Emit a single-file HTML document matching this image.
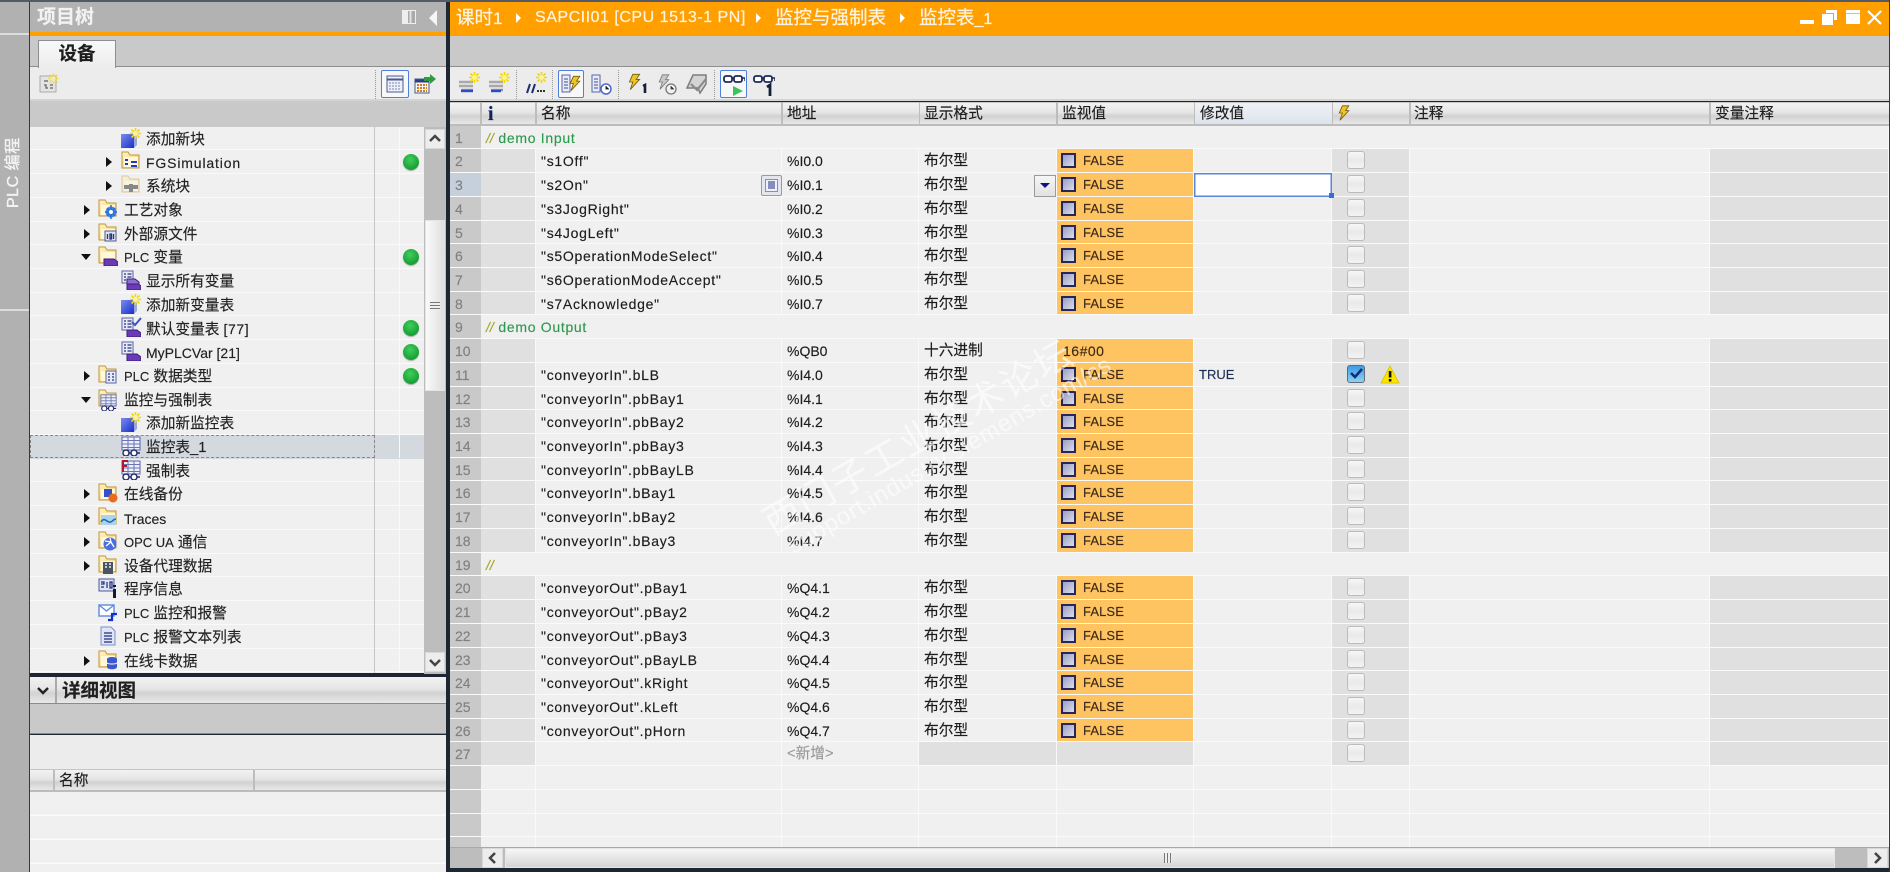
<!DOCTYPE html>
<html lang="zh"><head><meta charset="utf-8"><title>监控表_1</title>
<style>
*,*:before,*:after{box-sizing:border-box}
html,body{margin:0;padding:0;background:#1e2533}
body{width:1890px;height:872px;overflow:hidden;position:relative;font:14.7px/22px "Liberation Sans","Noto Sans CJK SC",sans-serif;color:#1c1c1c;-webkit-text-stroke:.15px}
#w{position:absolute;inset:0;filter:blur(.35px);overflow:hidden}
.p{position:absolute}
.l{font-size:13px;font-weight:400}
.k{font-size:14px;font-weight:400}
svg{position:absolute;overflow:visible}
.hd{background:linear-gradient(#f2f2f2,#e6e6e6 45%,#d2d2d2 62%,#e8e8e8);border-top:1px solid #c6c6c6;border-bottom:2px solid #bcbcbc}
.t{position:relative;height:23.72px;border-bottom:1.5px solid #fafafa;background:#f0f0f0;white-space:nowrap}
.t:before{content:"";position:absolute;left:344px;top:0;bottom:-2px;width:1px;background:#c6c6c6}
.t:after{content:"";position:absolute;left:369px;top:0;bottom:0;width:1px;background:#fafafa}
.t span{position:absolute;top:2px;line-height:22px;color:#222}
.d1{left:94px}.d2{left:116px}
.t em{position:absolute;top:7px;border-style:solid;width:0;height:0}
.c1{left:54px;border-width:5px 0 5px 6px;border-color:transparent transparent transparent #111}
.c2{left:76px;border-width:5px 0 5px 6px;border-color:transparent transparent transparent #111}
.o1{left:51px;top:9px!important;border-width:6px 5px 0 5px;border-color:#111 transparent transparent transparent;}
.t svg{width:20px;height:20px;top:1px}
.i1{left:68px}.i2{left:91px}
.g{position:absolute;left:373px;top:4px;width:16px;height:16px;border-radius:50%;background:radial-gradient(circle at 45% 35%,#3fce5a,#169c32 75%);box-shadow:0 1px 1px #aaa;z-index:2}
.r{display:grid;grid-template-columns:31px 55px 246px 137px 138px 137px 138px 78px 300px 179px;grid-template-rows:23.72px;height:23.72px;white-space:nowrap}
.r i{font-style:normal;display:block;background:#f0f0f0;border-right:1.5px solid #f9f9f9;border-bottom:1.5px solid #fafafa;padding:0 0 0 5px;position:relative;overflow:visible;line-height:24px}
.r i.n{background:#c9c9c9;color:#808080;padding-left:5px;border-right:0;font-size:14px}
.r i.y{background:#e0e0e0}
.r i.m{background:#fec462;padding-left:26px;font-size:13px;letter-spacing:.1px;color:#3f2a18}
.r i.m:before{content:"";position:absolute;left:4px;top:4px;width:15px;height:15px;border:2px solid #26265e;background:linear-gradient(135deg,#9a9ec4,#dcdde8)}
.r i.m.h{padding-left:6px;font-size:14px;letter-spacing:.5px}.r i.m.h:before{display:none}
.r i.b:before{content:"";position:absolute;left:15px;top:2px;width:18px;height:18px;border:1.5px solid #bbb;border-radius:3px;background:linear-gradient(#f7f7f7,#e9e9e9 50%,#f3f3f3)}
.r.c{display:flex}
.r.c i.s{flex:1;color:#2e9a4f;padding-left:5px;font-size:14px;letter-spacing:.7px}
.s u{text-decoration:none;color:#a3a52c;font-style:italic;letter-spacing:0}
.r i.a{letter-spacing:.72px;font-size:14px}
.r i.f{font-size:14px}
</style></head><body>
<svg width="0" height="0" style="position:absolute"><defs>
<linearGradient id="gb" x1="0" y1="0" x2="1" y2="1"><stop offset="0" stop-color="#7a8cf0"/><stop offset="1" stop-color="#1a2fc8"/></linearGradient>
<linearGradient id="gf" x1="0" y1="0" x2="1" y2="1"><stop offset="0" stop-color="#fff3c4"/><stop offset="1" stop-color="#f4cf6d"/></linearGradient>
<symbol id="folder" viewBox="0 0 20 20"><path d="M1 1h6l2 3h9v13H1z" fill="url(#gf)" stroke="#c0963c"/><path d="M3 6H17V16H3z" fill="#fff8da"/></symbol>
<symbol id="star" viewBox="0 0 20 20"><g stroke="#f2d800" stroke-width="1.600"><path d="M14.500 0v11M9 5.500h11M10.500 1.500l8 8M18.500 1.500l-8 8"/></g><circle cx="14.500" cy="5.500" r="2.500" fill="#fff58a"/></symbol>
<symbol id="new" viewBox="0 0 20 20"><path d="M0 6h13v14H0z" fill="url(#gb)"/><path d="M13 6l3 3v8l-3 3z" fill="#9aa7d8"/><use href="#star"/></symbol>
<symbol id="tag" viewBox="0 0 20 20"><path d="M6 13h10l4 3v4H6z" fill="#6a3ab8" stroke="#3a1f78"/></symbol>
<symbol id="list" viewBox="0 0 20 20"><rect x="1" y="1" width="11" height="12" fill="#e8ebf6" stroke="#5a64a8"/><path d="M3 4h2M3 7h2M3 10h2M6.500 4h4M6.500 7h4M6.500 10h4" stroke="#24307c" stroke-width="1.300"/><use href="#tag"/></symbol>
<symbol id="grid" viewBox="0 0 20 20"><rect x="1" y="1" width="18" height="13" fill="#eef0f8" stroke="#5a64a8"/><path d="M1 4.500h18M1 8h18M1 11.500h18M7 1v13M13 1v13" stroke="#6a74b8"/><circle cx="5" cy="17" r="3" fill="#fff" stroke="#23296e" stroke-width="1.400"/><circle cx="13" cy="17" r="3" fill="#fff" stroke="#23296e" stroke-width="1.400"/><path d="M8 17h2M16 17h3" stroke="#23296e" stroke-width="1.400"/></symbol>
<symbol id="bolt" viewBox="0 0 20 20"><path d="M8 1h8l-4 6h4L5 19l3-9H4z" fill="#efc320" stroke="#6d5a12"/></symbol>
<symbol id="boltg" viewBox="0 0 20 20"><path d="M8 1h8l-4 6h4L5 19l3-9H4z" fill="#c8c8c8" stroke="#777"/></symbol>
<symbol id="bars" viewBox="0 0 22 22"><path d="M1 9h14M1 13h14" stroke="#a8a8a8" stroke-width="2.400"/><path d="M3 17h12" stroke="#909090" stroke-width="2.400"/></symbol>
<symbol id="glass" viewBox="0 0 22 12"><rect x="1" y="2" width="8" height="6" rx="2" fill="#fff" stroke="#1f2a5c" stroke-width="1.800"/><rect x="11" y="2" width="8" height="6" rx="2" fill="#fff" stroke="#1f2a5c" stroke-width="1.800"/><path d="M9 4h2M19 4h3v3" stroke="#1f2a5c" stroke-width="1.500" fill="none"/></symbol>
</defs></svg>
<div id="w">
<!-- left strip -->
<div class="p" style="left:0;top:0;width:30px;height:872px;background:#b1b1b1"></div>
<div class="p" style="left:0;top:33px;width:29px;height:1.500px;background:#dcdcdc"></div>
<div class="p" style="left:0;top:309px;width:29px;height:1.500px;background:#dcdcdc"></div>
<div class="p" style="left:-21px;top:162px;width:70px;height:22px;transform:rotate(-90deg);color:#f4f4f4;font-size:16px;text-align:center;white-space:nowrap;letter-spacing:.5px;-webkit-text-stroke:.35px">PLC 编程</div>
<div class="p" style="left:29px;top:0;width:1.500px;height:872px;background:#30384a"></div>
<!-- left panel -->
<div class="p" style="left:30px;top:2px;width:416px;height:30px;background:#b2b2b2"></div>
<div class="p" style="left:37px;top:6px;color:#f2f2f2;font-size:19px;font-weight:bold;line-height:24px">项目树</div>
<div class="p" style="left:402px;top:10px;width:14px;height:14px;border:1.500px solid #eee;background:linear-gradient(90deg,#eee 40%,#aaa 40%,#aaa 55%,#e2e2e2 55%,#e2e2e2 70%,#aaa 70%)"></div>
<div class="p" style="left:429px;top:10px;width:0;height:0;border-style:solid;border-width:8px 8px 8px 0;border-color:transparent #f6f6f6 transparent transparent"></div>
<div class="p" style="left:30px;top:32px;width:416px;height:4px;background:#ff9f00"></div>
<div class="p" style="left:30px;top:36px;width:416px;height:30px;background:#c9c9c9"></div>
<div class="p" style="left:38px;top:40px;width:78px;height:28px;background:linear-gradient(#f8f8f8,#ececec);border:1px solid #8f8f8f;border-bottom:0;text-align:center;font-weight:bold;font-size:18.500px;line-height:25px;color:#1c1c1c;z-index:2">设备</div>
<div class="p" style="left:30px;top:66px;width:416px;height:1.500px;background:#8e8e8e"></div>
<div class="p" style="left:30px;top:67px;width:416px;height:34px;background:#ececec;border-bottom:2px solid #d4d4d4"></div>
<svg style="left:39px;top:73px;width:20px;height:20px" viewBox="0 0 20 20"><rect x="1" y="3" width="16" height="16" fill="#e4e4e4" stroke="#aaa"/><path d="M5 8h4M5 12h2v3h2M11 12h3M11 15h3" stroke="#777" stroke-width="1.500" fill="none"/><use href="#star" opacity=".5"/></svg>
<div class="p" style="left:375px;top:70px;border-left:1px dotted #999;height:29px"></div>
<div class="p" style="left:381px;top:70px;width:28px;height:28px;background:#f8f8f8;border:1.500px solid #4f80dc;border-radius:2px"></div>
<svg style="left:386px;top:75px;width:18px;height:18px" viewBox="0 0 18 18"><rect x="1" y="1" width="16" height="16" fill="#eef0f8" stroke="#4b5a8c"/><path d="M1 4.500h16" stroke="#4b5a8c" stroke-width="2"/><path d="M3 8h12M3 11h12M3 14h12" stroke="#7985b8" stroke-dasharray="2 1"/></svg>
<svg style="left:414px;top:74px;width:22px;height:20px" viewBox="0 0 22 20"><rect x="1" y="5" width="14" height="14" fill="#f4f4f4" stroke="#4b5a8c"/><path d="M1 7h14" stroke="#2c3e86" stroke-width="3"/><path d="M3 11h10M3 14h10M3 17h10" stroke="#d27a20" stroke-width="2" stroke-dasharray="2 1"/><path d="M10 3h6V0l6 5-6 5V7h-6z" fill="#2e9b44"/></svg>
<div class="p" style="left:30px;top:101px;width:416px;height:25.700px;background:#c9c9c9"></div>
<!-- tree -->
<div class="p" style="left:30px;top:126.700px;width:394px;height:546px;overflow:hidden;background:#f0f0f0">
<div class="t"><svg class="i2"><use href="#new"/></svg><span class="d2">添加新块</span></div>
<div class="t"><em class="c2"></em><svg class="i2"><use href="#folder"/><path d="M4 8h3v2H4zM4 12h3v2H4zM10 10h6v2h-6zM10 14h6v2h-6z" fill="#1c3bc8"/></svg><span class="d2 k" style="letter-spacing:.85px">FGSimulation</span><b class="g"></b></div>
<div class="t"><em class="c2"></em><svg class="i2"><use href="#folder" opacity=".45"/><path d="M3 12h14" stroke="#888" stroke-width="4"/><rect x="8" y="9" width="4" height="8" fill="#888"/></svg><span class="d2">系统块</span></div>
<div class="t"><em class="c1"></em><svg class="i1"><use href="#folder"/><circle cx="13" cy="13" r="5.500" fill="#3d8ae8"/><path d="M13 6v14M7 13h12M9 9l8 8M17 9l-8 8" stroke="#2a6ad0" stroke-width="1.500"/><circle cx="13" cy="13" r="2" fill="#fff"/></svg><span class="d1">工艺对象</span></div>
<div class="t"><em class="c1"></em><svg class="i1"><use href="#folder"/><rect x="7" y="8" width="11" height="10" fill="#dfe3f2" stroke="#4a5a9c"/><path d="M9.500 11v5M12 11h1.500v5H12zM15.500 11v5" stroke="#26357c" stroke-width="1.300" fill="none"/></svg><span class="d1">外部源文件</span></div>
<div class="t"><em class="o1" style="left:51px"></em><svg class="i1"><use href="#folder"/><use href="#tag"/></svg><span class="d1"><b class="l">PLC</b> 变量</span><b class="g"></b></div>
<div class="t"><svg class="i2"><use href="#list"/><path d="M6 9h8l4 3v2H6z" fill="#8f6cd0" stroke="#3a1f78"/></svg><span class="d2">显示所有变量</span></div>
<div class="t"><svg class="i2"><use href="#new"/></svg><span class="d2">添加新变量表</span></div>
<div class="t"><svg class="i2"><use href="#list"/><path d="M11 5l3 3 6-7" stroke="#3a53c4" stroke-width="2" fill="none"/></svg><span class="d2">默认变量表 <b class="k" style="letter-spacing:.6px">[77]</b></span><b class="g"></b></div>
<div class="t"><svg class="i2"><use href="#list"/></svg><span class="d2 k">MyPLCVar [21]</span><b class="g"></b></div>
<div class="t"><em class="c1"></em><svg class="i1"><use href="#folder"/><rect x="8" y="6" width="10" height="12" fill="#e8ebf6" stroke="#5a64a8"/><path d="M10 9h2M10 12h2M10 15h2M14 9h2M14 12h2M14 15h2" stroke="#24307c" stroke-width="1.300"/></svg><span class="d1"><b class="l">PLC</b> 数据类型</span><b class="g"></b></div>
<div class="t"><em class="o1"></em><svg class="i1"><use href="#folder"/><g transform="translate(2,5) scale(.85)"><use href="#grid" width="20" height="20"/></g></svg><span class="d1">监控与强制表</span></div>
<div class="t"><svg class="i2"><use href="#new"/></svg><span class="d2">添加新监控表</span></div>
<div class="t" style="background:#d3d9de;border-bottom-color:#d3d9de"><div class="p" style="left:0;top:0;bottom:0;width:345px;outline:1px dashed #888;outline-offset:-1px"></div><svg class="i2"><use href="#grid"/></svg><span class="d2">监控表_1</span></div>
<div class="t"><svg class="i2"><use href="#grid"/><path d="M1 0h6v2H3v3h3v2H3v5H1z" fill="#b3172c"/></svg><span class="d2">强制表</span></div>
<div class="t"><em class="c1"></em><svg class="i1"><use href="#folder"/><rect x="6" y="6" width="8" height="8" fill="#3452c8"/><circle cx="15" cy="15" r="4.500" fill="#ec6a1c"/></svg><span class="d1">在线备份</span></div>
<div class="t"><em class="c1"></em><svg class="i1"><use href="#folder"/><rect x="3" y="8" width="15" height="10" fill="#a8d4ef"/><path d="M3 15c3-5 5-1 8 0s4-3 7-3" stroke="#2468b0" stroke-width="1.600" fill="none"/></svg><span class="d1 k">Traces</span></div>
<div class="t"><em class="c1"></em><svg class="i1"><use href="#folder"/><circle cx="12" cy="13" r="6.500" fill="#4a6ee0"/><path d="M7 10l6 1 3 5M12 7l1 4-5 4" stroke="#fff" stroke-width="1.300" fill="none"/></svg><span class="d1"><b class="l">OPC UA</b> 通信</span></div>
<div class="t"><em class="c1"></em><svg class="i1"><use href="#folder"/><rect x="5" y="7" width="10" height="12" fill="#4a5564"/><path d="M7 9h2M11 9h2M7 12h2M11 12h2" stroke="#eee" stroke-width="1.500"/></svg><span class="d1">设备代理数据</span></div>
<div class="t"><svg class="i1"><rect x="1" y="1" width="15" height="12" fill="#dfe3f2" stroke="#4a5a9c"/><path d="M3 4h3v2H3M3 9h3M9 4v6M12 4h2v6h-2z" stroke="#1f2a7c" stroke-width="1.200" fill="none"/><path d="M15 7h3v2h-3zM15 11h3v9h-3z" fill="#101a30"/></svg><span class="d1">程序信息</span></div>
<div class="t"><svg class="i1"><rect x="1" y="3" width="15" height="11" fill="#fff" stroke="#5c8adf" stroke-width="1.400"/><path d="M1 3l7.500 6L16 3" stroke="#5c8adf" stroke-width="1.400" fill="none"/><path d="M10 18h4v-6h5" stroke="#1030cc" stroke-width="2.200" fill="none"/></svg><span class="d1"><b class="l">PLC</b> 监控和报警</span></div>
<div class="t"><svg class="i1"><path d="M3 1h10l4 4v14H3z" fill="#dfe5f7" stroke="#7e8ecb"/><path d="M6 7h8M6 10h8M6 13h8M6 16h8" stroke="#1f2a7c" stroke-width="1.300"/></svg><span class="d1"><b class="l">PLC</b> 报警文本列表</span></div>
<div class="t"><em class="c1"></em><svg class="i1"><use href="#folder"/><ellipse cx="14" cy="9" rx="5" ry="2" fill="#3a58cc"/><path d="M9 9v8c0 3 10 3 10 0V9" fill="#3a58cc"/><path d="M9 12.500c0 2 10 2 10 0" stroke="#fff" fill="none"/></svg><span class="d1">在线卡数据</span></div>
</div>
<!-- tree scrollbar -->
<div class="p" style="left:424px;top:126.700px;width:22px;height:547px;background:#bdbdbd"></div>
<div class="p" style="left:425px;top:129px;width:20px;height:20px;background:#ededed;border:1px solid #d8d8d8"></div>
<svg style="left:429px;top:134px;width:12px;height:9px" viewBox="0 0 12 9"><path d="M1 7l5-5 5 5" stroke="#444" stroke-width="2.500" fill="none"/></svg>
<div class="p" style="left:425px;top:220px;width:20px;height:171px;background:linear-gradient(90deg,#fafafa,#dedede);border:1px solid #e4e4e4"></div>
<div class="p" style="left:430px;top:302px;width:10px;height:8px;background:repeating-linear-gradient(#777 0 1px,#eee 1px 3px)"></div>
<div class="p" style="left:425px;top:652px;width:20px;height:20px;background:#ededed;border:1px solid #d8d8d8"></div>
<svg style="left:429px;top:658px;width:12px;height:9px" viewBox="0 0 12 9"><path d="M1 2l5 5 5-5" stroke="#444" stroke-width="2.500" fill="none"/></svg>
<!-- detail -->
<div class="p" style="left:30px;top:673.500px;width:416px;height:3.500px;background:#1e2533"></div>
<div class="p hd" style="left:30px;top:677px;width:416px;height:27px;border-top:0;border-bottom:1.500px solid #8a8a8a"></div>
<div class="p" style="left:55px;top:677px;width:1.500px;height:26px;background:#aaa"></div>
<svg style="left:37px;top:686px;width:12px;height:9px" viewBox="0 0 12 9"><path d="M1 2l5 5 5-5" stroke="#222" stroke-width="2.400" fill="none"/></svg>
<div class="p" style="left:62px;top:679px;font-weight:bold;font-size:18.500px;line-height:24px;color:#1f1f1f">详细视图</div>
<div class="p" style="left:30px;top:704px;width:416px;height:30px;background:#c9c9c9;border-bottom:1.500px solid #8c8c8c"></div>
<div class="p" style="left:30px;top:735px;width:416px;height:34px;background:#ececec"></div>
<div class="p hd" style="left:30px;top:769px;width:416px;height:23px"></div>
<div class="p" style="left:53px;top:770px;width:1.500px;height:21px;background:#bdbdbd"></div>
<div class="p" style="left:253px;top:770px;width:1.500px;height:21px;background:#bdbdbd"></div>
<div class="p" style="left:59px;top:770px">名称</div>
<div class="p" style="left:30px;top:792px;width:416px;height:80px;background:repeating-linear-gradient(#f0f0f0 0 22.500px,#fbfbfb 22.500px 24px)"></div>
<!-- divider -->
<div class="p" style="left:446px;top:0;width:4px;height:872px;background:#1e2533"></div>
<!-- right panel -->
<div class="p" style="left:450px;top:2px;width:1439px;height:34px;background:#ff9f00"></div>
<div class="p" style="left:456px;top:6px;color:#fdf3e0;font-size:18.500px;line-height:24px;-webkit-text-stroke:.25px">课时<span style="font-size:17px;letter-spacing:.4px">1</span></div>
<div class="p" style="left:535px;top:6px;color:#fdf3e0;font-size:16px;line-height:24px;letter-spacing:.52px;white-space:nowrap;-webkit-text-stroke:.25px">SAPCII01 [CPU 1513-1 PN]</div>
<div class="p" style="left:775px;top:6px;color:#fdf3e0;font-size:18.500px;line-height:24px;white-space:nowrap;-webkit-text-stroke:.25px">监控与强制表</div>
<div class="p" style="left:919px;top:6px;color:#fdf3e0;font-size:18.500px;line-height:24px;white-space:nowrap;-webkit-text-stroke:.25px">监控表<span style="font-size:16px">_1</span></div>
<div class="p" style="left:516px;top:13px;border-style:solid;border-width:5px 0 5px 5px;border-color:transparent transparent transparent #fff"></div>
<div class="p" style="left:756px;top:13px;border-style:solid;border-width:5px 0 5px 5px;border-color:transparent transparent transparent #fff"></div>
<div class="p" style="left:900px;top:13px;border-style:solid;border-width:5px 0 5px 5px;border-color:transparent transparent transparent #fff"></div>
<div class="p" style="left:1800px;top:20px;width:14px;height:4px;background:#fff"></div>
<svg style="left:1822px;top:10px;width:15px;height:15px" viewBox="0 0 15 15"><path d="M4 0h11v10h-3V3H4z" fill="#fff"/><rect y="4" width="11" height="11" fill="#fff"/></svg>
<div class="p" style="left:1846px;top:10px;width:14px;height:14px;background:linear-gradient(#fff 3px,#ffb84a 3px,#ffb84a 4px,#fff 4px)"></div>
<svg style="left:1867px;top:10px;width:15px;height:15px" viewBox="0 0 15 15"><path d="M1 1l13 13M14 1L1 14" stroke="#fff" stroke-width="2.200"/></svg>
<div class="p" style="left:450px;top:36px;width:1439px;height:30px;background:#c9c9c9"></div>
<div class="p" style="left:450px;top:66px;width:1439px;height:1.500px;background:#8e8e8e"></div>
<div class="p" style="left:450px;top:67px;width:1439px;height:34px;background:#ececec;border-bottom:2px solid #d4d4d4"></div>
<!-- toolbar icons -->
<svg style="left:458px;top:73px;width:22px;height:22px"><use href="#bars"/><path d="M3 18h12" stroke="#2c4ec4" stroke-width="2.400"/><use href="#star" x="2" y="-1" width="20" height="20"/></svg>
<svg style="left:488px;top:73px;width:22px;height:22px"><use href="#bars"/><path d="M3 18h10" stroke="#2c4ec4" stroke-width="2.400"/><use href="#star" x="2" y="-1" width="20" height="20"/></svg>
<div class="p" style="left:516px;top:70px;border-left:1px dotted #999;height:29px"></div>
<svg style="left:524px;top:73px;width:22px;height:22px" viewBox="0 0 22 22"><path d="M3 20l3-9M8 20l3-9" stroke="#1e2e6c" stroke-width="2"/><path d="M13 18h2M16 18h2M19 18h2" stroke="#333" stroke-width="2"/><use href="#star" x="3" y="-1" width="20" height="20"/></svg>
<div class="p" style="left:552px;top:70px;border-left:1px dotted #999;height:29px"></div>
<div class="p" style="left:558px;top:70px;width:26px;height:28px;background:#f8f8f8;border:1.500px solid #4f80dc;border-radius:2px"></div>
<svg style="left:561px;top:73px;width:22px;height:22px" viewBox="0 0 22 22"><rect x="1" y="2" width="8" height="17" fill="#e8ebf6" stroke="#5a64a8"/><path d="M3 6h4M3 9h4M3 12h4M3 15h4" stroke="#444b8c"/><use href="#bolt" x="6" y="1" width="16" height="19"/></svg>
<svg style="left:591px;top:73px;width:22px;height:22px" viewBox="0 0 22 22"><rect x="1" y="2" width="8" height="17" fill="#e8ebf6" stroke="#5a64a8"/><path d="M3 6h4M3 9h4M3 12h4M3 15h4" stroke="#444b8c"/><circle cx="15" cy="16" r="5" fill="#fff" stroke="#4d6ad0" stroke-width="1.500"/><path d="M15 13v3h3" stroke="#333"/></svg>
<div class="p" style="left:618px;top:70px;border-left:1px dotted #999;height:29px"></div>
<svg style="left:626px;top:73px;width:22px;height:22px" viewBox="0 0 22 22"><use href="#bolt" width="17" height="18"/><path d="M17 13l2-1v8" stroke="#14203a" stroke-width="2.600" fill="none"/></svg>
<svg style="left:656px;top:73px;width:22px;height:22px" viewBox="0 0 22 22"><use href="#boltg" width="16" height="18"/><circle cx="15" cy="16" r="5" fill="#f2f2f2" stroke="#777" stroke-width="1.300"/><path d="M15 13v3h3" stroke="#555"/></svg>
<svg style="left:686px;top:73px;width:22px;height:22px" viewBox="0 0 22 22"><path d="M7 2h13v9l-6 9-2-5H1z" fill="#d4d4d4" stroke="#7c7c7c" stroke-width="1.500"/><path d="M5 11l6 6 9-11" stroke="#888" stroke-width="2" fill="none"/></svg>
<div class="p" style="left:714px;top:70px;border-left:1px dotted #999;height:29px"></div>
<div class="p" style="left:720px;top:70px;width:27px;height:28px;background:#f8f8f8;border:1.500px solid #4f80dc;border-radius:2px"></div>
<svg style="left:723px;top:74px;width:22px;height:12px"><use href="#glass"/></svg>
<svg style="left:732px;top:86px;width:12px;height:10px" viewBox="0 0 12 10"><path d="M1 0l10 5-10 5z" fill="#3ec25a"/></svg>
<svg style="left:753px;top:74px;width:22px;height:12px"><use href="#glass"/></svg>
<svg style="left:766px;top:84px;width:8px;height:12px" viewBox="0 0 8 12"><path d="M1 3l3-2v11" stroke="#14203a" stroke-width="2.800" fill="none"/></svg>
<!-- table header -->
<div class="p hd" style="left:450px;top:102px;width:1439px;height:24px"></div>
<div class="p" style="left:480px;top:102px;width:1.500px;height:23px;background:#bdbdbd"></div>
<div class="p" style="left:535px;top:102px;width:1.500px;height:23px;background:#bdbdbd"></div>
<div class="p" style="left:781px;top:102px;width:1.500px;height:23px;background:#bdbdbd"></div>
<div class="p" style="left:918.500px;top:102px;width:1.500px;height:23px;background:#bdbdbd"></div>
<div class="p" style="left:1056px;top:102px;width:1.500px;height:23px;background:#bdbdbd"></div>
<div class="p" style="left:1194.500px;top:103px;width:137px;height:21px;background:linear-gradient(#eff1f5,#dde3ed)"></div>
<div class="p" style="left:1193.500px;top:102px;width:1.500px;height:23px;background:#bdbdbd"></div>
<div class="p" style="left:1331.500px;top:102px;width:1.500px;height:23px;background:#bdbdbd"></div>
<div class="p" style="left:1409px;top:102px;width:1.500px;height:23px;background:#bdbdbd"></div>
<div class="p" style="left:1709px;top:102px;width:1.500px;height:23px;background:#bdbdbd"></div>
<div class="p" style="left:488px;top:103px;font:bold 20px/22px 'Liberation Serif',serif;color:#12205c">i</div>
<div class="p" style="left:541px;top:103px">名称</div>
<div class="p" style="left:787px;top:103px">地址</div>
<div class="p" style="left:924px;top:103px">显示格式</div>
<div class="p" style="left:1062px;top:103px">监视值</div>
<div class="p" style="left:1200px;top:103px">修改值</div>
<svg style="left:1336px;top:104px;width:16px;height:18px" viewBox="0 0 20 20"><use href="#bolt"/></svg>
<div class="p" style="left:1414px;top:103px">注释</div>
<div class="p" style="left:1715px;top:103px">变量注释</div>
<!-- table -->
<div class="p" style="left:450px;top:125.700px;width:1439px;height:721px;overflow:hidden;background:#f0f0f0">
<div class="r c"><i class="n" style="width:31px">1</i><i class="s"><u>//</u> demo Input</i></div>
<div class="r"><i class="n">2</i><i class="y"></i><i class="a">"s1Off"</i><i class="f">%I0.0</i><i>布尔型</i><i class="m">FALSE</i><i></i><i class="y b"></i><i></i><i class="y"></i></div>
<div class="r"><i class="n" style="background:#c5d0dc">3</i><i class="y"></i><i class="a">"s2On"</i><i class="f">%I0.1</i><i>布尔型</i><i class="m">FALSE</i><i style="background:#fff;box-shadow:inset 0 0 0 1.500px #5a86dc;border:0"></i><i class="y b"></i><i></i><i class="y"></i></div>
<div class="r"><i class="n">4</i><i class="y"></i><i class="a">"s3JogRight"</i><i class="f">%I0.2</i><i>布尔型</i><i class="m">FALSE</i><i></i><i class="y b"></i><i></i><i class="y"></i></div>
<div class="r"><i class="n">5</i><i class="y"></i><i class="a">"s4JogLeft"</i><i class="f">%I0.3</i><i>布尔型</i><i class="m">FALSE</i><i></i><i class="y b"></i><i></i><i class="y"></i></div>
<div class="r"><i class="n">6</i><i class="y"></i><i class="a">"s5OperationModeSelect"</i><i class="f">%I0.4</i><i>布尔型</i><i class="m">FALSE</i><i></i><i class="y b"></i><i></i><i class="y"></i></div>
<div class="r"><i class="n">7</i><i class="y"></i><i class="a">"s6OperationModeAccept"</i><i class="f">%I0.5</i><i>布尔型</i><i class="m">FALSE</i><i></i><i class="y b"></i><i></i><i class="y"></i></div>
<div class="r"><i class="n">8</i><i class="y"></i><i class="a">"s7Acknowledge"</i><i class="f">%I0.7</i><i>布尔型</i><i class="m">FALSE</i><i></i><i class="y b"></i><i></i><i class="y"></i></div>
<div class="r c"><i class="n" style="width:31px">9</i><i class="s"><u>//</u> demo Output</i></div>
<div class="r"><i class="n">10</i><i class="y"></i><i></i><i class="f">%QB0</i><i>十六进制</i><i class="m h">16#00</i><i></i><i class="y b"></i><i></i><i class="y"></i></div>
<div class="r"><i class="n">11</i><i class="y"></i><i class="a">"conveyorIn".bLB</i><i class="f">%I4.0</i><i>布尔型</i><i class="m">FALSE</i><i style="font-size:13px;color:#1f2f55">TRUE</i><i class="y"></i><i></i><i class="y"></i></div>
<div class="r"><i class="n">12</i><i class="y"></i><i class="a">"conveyorIn".pbBay1</i><i class="f">%I4.1</i><i>布尔型</i><i class="m">FALSE</i><i></i><i class="y b"></i><i></i><i class="y"></i></div>
<div class="r"><i class="n">13</i><i class="y"></i><i class="a">"conveyorIn".pbBay2</i><i class="f">%I4.2</i><i>布尔型</i><i class="m">FALSE</i><i></i><i class="y b"></i><i></i><i class="y"></i></div>
<div class="r"><i class="n">14</i><i class="y"></i><i class="a">"conveyorIn".pbBay3</i><i class="f">%I4.3</i><i>布尔型</i><i class="m">FALSE</i><i></i><i class="y b"></i><i></i><i class="y"></i></div>
<div class="r"><i class="n">15</i><i class="y"></i><i class="a">"conveyorIn".pbBayLB</i><i class="f">%I4.4</i><i>布尔型</i><i class="m">FALSE</i><i></i><i class="y b"></i><i></i><i class="y"></i></div>
<div class="r"><i class="n">16</i><i class="y"></i><i class="a">"conveyorIn".bBay1</i><i class="f">%I4.5</i><i>布尔型</i><i class="m">FALSE</i><i></i><i class="y b"></i><i></i><i class="y"></i></div>
<div class="r"><i class="n">17</i><i class="y"></i><i class="a">"conveyorIn".bBay2</i><i class="f">%I4.6</i><i>布尔型</i><i class="m">FALSE</i><i></i><i class="y b"></i><i></i><i class="y"></i></div>
<div class="r"><i class="n">18</i><i class="y"></i><i class="a">"conveyorIn".bBay3</i><i class="f">%I4.7</i><i>布尔型</i><i class="m">FALSE</i><i></i><i class="y b"></i><i></i><i class="y"></i></div>
<div class="r c"><i class="n" style="width:31px">19</i><i class="s"><u>//</u></i></div>
<div class="r"><i class="n">20</i><i class="y"></i><i class="a">"conveyorOut".pBay1</i><i class="f">%Q4.1</i><i>布尔型</i><i class="m">FALSE</i><i></i><i class="y b"></i><i></i><i class="y"></i></div>
<div class="r"><i class="n">21</i><i class="y"></i><i class="a">"conveyorOut".pBay2</i><i class="f">%Q4.2</i><i>布尔型</i><i class="m">FALSE</i><i></i><i class="y b"></i><i></i><i class="y"></i></div>
<div class="r"><i class="n">22</i><i class="y"></i><i class="a">"conveyorOut".pBay3</i><i class="f">%Q4.3</i><i>布尔型</i><i class="m">FALSE</i><i></i><i class="y b"></i><i></i><i class="y"></i></div>
<div class="r"><i class="n">23</i><i class="y"></i><i class="a">"conveyorOut".pBayLB</i><i class="f">%Q4.4</i><i>布尔型</i><i class="m">FALSE</i><i></i><i class="y b"></i><i></i><i class="y"></i></div>
<div class="r"><i class="n">24</i><i class="y"></i><i class="a">"conveyorOut".kRight</i><i class="f">%Q4.5</i><i>布尔型</i><i class="m">FALSE</i><i></i><i class="y b"></i><i></i><i class="y"></i></div>
<div class="r"><i class="n">25</i><i class="y"></i><i class="a">"conveyorOut".kLeft</i><i class="f">%Q4.6</i><i>布尔型</i><i class="m">FALSE</i><i></i><i class="y b"></i><i></i><i class="y"></i></div>
<div class="r"><i class="n">26</i><i class="y"></i><i class="a">"conveyorOut".pHorn</i><i class="f">%Q4.7</i><i>布尔型</i><i class="m">FALSE</i><i></i><i class="y b"></i><i></i><i class="y"></i></div>
<div class="r"><i class="n">27</i><i class="y"></i><i></i><i style="color:#9a9a9a">&lt;新增&gt;</i><i class="y"></i><i class="y"></i><i></i><i class="y b"></i><i></i><i class="y"></i></div>
<div class="r"><i class="n"></i><i></i><i></i><i></i><i></i><i></i><i></i><i></i><i></i><i></i></div>
<div class="r"><i class="n"></i><i></i><i></i><i></i><i></i><i></i><i></i><i></i><i></i><i></i></div>
<div class="r"><i class="n"></i><i></i><i></i><i></i><i></i><i></i><i></i><i></i><i></i><i></i></div>
<div class="r"><i class="n"></i><i></i><i></i><i></i><i></i><i></i><i></i><i></i><i></i><i></i></div>
</div>
<!-- row 3 extras -->
<div class="p" style="left:761px;top:175px;width:21px;height:21px;background:#e4e6ee;border:1.500px solid #9a9a9a;border-radius:2px"></div>
<svg style="left:765px;top:179px;width:13px;height:13px" viewBox="0 0 13 13"><rect x=".5" y=".5" width="12" height="12" fill="#eef0fa" stroke="#7e8ecb"/><path d="M3 3h7M3 5h7M3 7h7M3 9h7" stroke="#1f2a7c"/></svg>
<div class="p" style="left:1034px;top:174.500px;width:22px;height:22px;background:linear-gradient(#f6f6f6,#e2e2e2);border:1.500px solid #9a9a9a"></div>
<div class="p" style="left:1040px;top:183px;border-style:solid;border-width:5px 5px 0 5px;border-color:#0c1480 transparent transparent transparent"></div>
<div class="p" style="left:1329px;top:193px;width:5px;height:5px;background:#3a6ae0"></div>
<!-- row 11 checkbox / warning -->
<div class="p" style="left:1347px;top:365px;width:18px;height:18px;border:1.500px solid #5f6c78;border-radius:3px;background:linear-gradient(#3d9ce8,#8fd0f2)"></div>
<svg style="left:1350px;top:368px;width:13px;height:12px" viewBox="0 0 13 12"><path d="M1 5l4 4 7-8" stroke="#0f2f78" stroke-width="2.600" fill="none"/></svg>
<svg style="left:1380px;top:365px;width:20px;height:19px" viewBox="0 0 20 19"><path d="M10 1l9 17H1z" fill="#fbe400" stroke="#d8c000" stroke-width=".8"/><path d="M8.800 6h2.600v6.500H8.800zM8.800 14h2.600v2.500H8.800z" fill="#111"/></svg>
<!-- bottom scrollbar -->
<div class="p" style="left:450px;top:846.500px;width:1439px;height:21.500px;background:#bdbdbd;border-top:1.500px solid #a8a8a8"></div>
<div class="p" style="left:482px;top:848px;width:21px;height:20px;background:#ededed;border:1px solid #d8d8d8"></div>
<svg style="left:488px;top:852px;width:9px;height:12px" viewBox="0 0 9 12"><path d="M7 1L2 6l5 5" stroke="#444" stroke-width="2.500" fill="none"/></svg>
<div class="p" style="left:505px;top:848px;width:1330px;height:20px;background:linear-gradient(#f6f6f6,#d6d6d6);border:1px solid #e6e6e6"></div>
<div class="p" style="left:1164px;top:853px;width:8px;height:10px;background:repeating-linear-gradient(90deg,#777 0 1px,#eee 1px 3px)"></div>
<div class="p" style="left:1867px;top:848px;width:21px;height:20px;background:#ededed;border:1px solid #d8d8d8"></div>
<svg style="left:1873px;top:852px;width:9px;height:12px" viewBox="0 0 9 12"><path d="M2 1l5 5-5 5" stroke="#444" stroke-width="2.500" fill="none"/></svg>
<div class="p" style="left:0;top:0;width:1890px;height:2px;background:#545a66"></div>
<div class="p" style="left:450px;top:868px;width:1440px;height:4px;background:#1e2533"></div>
<div class="p" style="left:1889px;top:0;width:1px;height:872px;background:#30384a"></div>
<!-- watermark -->
<div class="p" style="left:767px;top:504px;transform-origin:0 50%;transform:rotate(-30deg);font-size:37px;line-height:44px;letter-spacing:2px;color:rgba(255,255,255,.62);white-space:nowrap;-webkit-text-stroke:0">西门子工业技术论坛</div>
<div class="p" style="left:790px;top:533px;transform-origin:0 50%;transform:rotate(-30deg);font-size:24px;line-height:30px;letter-spacing:.7px;color:rgba(255,255,255,.6);white-space:nowrap;-webkit-text-stroke:0">support.industry.siemens.com/cs</div>
</div>
</body></html>
